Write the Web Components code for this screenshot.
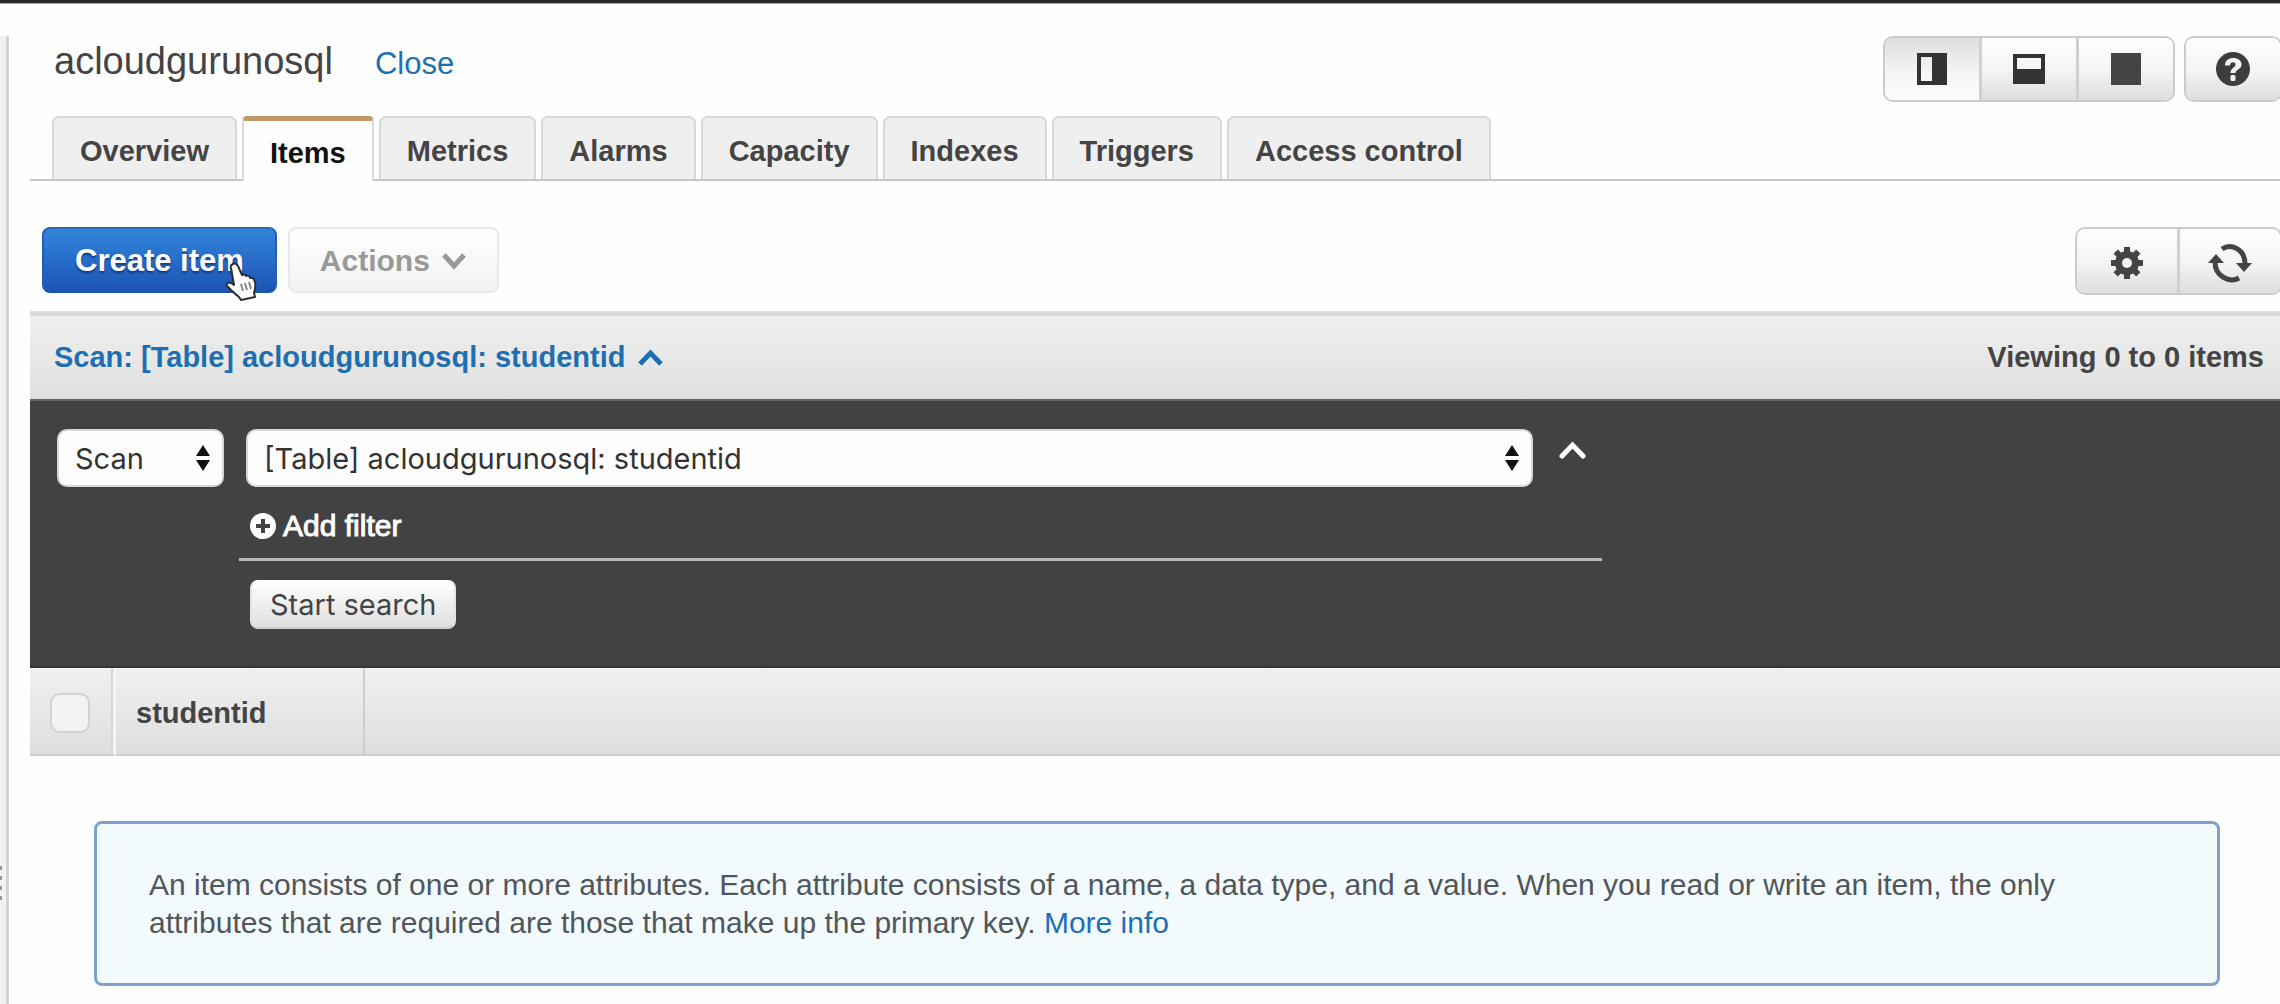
<!DOCTYPE html>
<html lang="en">
<head>
<meta charset="utf-8">
<title>acloudgurunosql</title>
<style>
html,body{margin:0;height:100%}
body{font-family:"Liberation Sans",Arial,sans-serif;font-size:29px;line-height:34px;color:#444;background:#fefefe;overflow:hidden}
</style>
</head>
<body>
<db-console></db-console>

<template id="t-console">
<style>
:host{display:flex;flex-direction:column;min-height:100vh;border-top:3px solid #2b292b;box-sizing:border-box;box-shadow:inset 0 1px 0 #aaa}
.body{flex:1;display:flex;gap:21px}
main{flex:1;min-width:0;padding-top:33px}
.head{display:flex;align-items:flex-start;justify-content:space-between;padding-left:24px;margin-right:-2px}
.name{display:flex;align-items:baseline;gap:42px;line-height:50px}
h1{margin:0;font-size:38px;font-weight:400}
a{color:#1f6fb5;text-decoration:none}
.name a{font-size:31px}
.groups{display:flex;gap:9px}
console-tabs{margin-top:14px}
.tools{display:flex;justify-content:space-between;align-items:flex-start;padding:46px 0 16px 12px;margin-right:-2px}
.acts{display:flex;gap:11px}
.create{position:relative;display:block}
.cursor{position:absolute;left:182px;top:34px;width:34px;height:40px}
</style>
<div class="body">
<pane-splitter></pane-splitter>
<main>
  <header class="head">
    <div class="name"><h1>acloudgurunosql</h1><a href="#close">Close</a></div>
    <div class="groups">
      <button-group>
        <icon-button label="Split left and right" pressed><svg width="30" height="32" viewBox="0 0 30 32"><path fill="#333" fill-rule="evenodd" d="M0 0h30v32H0zM4 4v24h11V4z"/></svg></icon-button>
        <icon-button label="Split top and bottom"><svg width="32" height="30" viewBox="0 0 32 30"><path fill="#333" fill-rule="evenodd" d="M0 0h32v30H0zM4 4v11h24V4z"/></svg></icon-button>
        <icon-button label="Full pane"><svg width="30" height="32" viewBox="0 0 30 32"><path fill="#444" d="M0 0h30v32H0z"/></svg></icon-button>
      </button-group>
      <button-group>
        <icon-button label="Help"><svg width="34" height="34" viewBox="0 0 34 34"><circle cx="17" cy="17" r="17" fill="#3d3d3d"/><path d="M9 13.500C9 8 13 6 17 6c5 0 8.500 2.500 8.500 6.500 0 5-6 5-6 8.500h-5c0-5 5-5.500 5-8.500 0-1.500-1-2.200-2.500-2.200-1.700 0-2.800 1-3 3.200z" fill="#f4f4f4"/><rect x="14.500" y="23" width="5" height="6" rx="1.500" fill="#f4f4f4"/></svg></icon-button>
      </button-group>
    </div>
  </header>
  <console-tabs>
    <console-tab>Overview</console-tab><console-tab selected>Items</console-tab><console-tab>Metrics</console-tab><console-tab>Alarms</console-tab><console-tab>Capacity</console-tab><console-tab>Indexes</console-tab><console-tab>Triggers</console-tab><console-tab>Access control</console-tab>
  </console-tabs>
  <div class="tools">
    <div class="acts">
      <div class="create">
        <console-button kind="primary">Create item</console-button>
        <svg class="cursor" viewBox="0 0 34 40" aria-hidden="true"><path d="M9 3c2-1 4 0 5 2l4 9c2-1 4 0 4 1 2-1 4 0 4 2 3-1 4 1 5 4 1 5 0 8-1 11l1 4-14 3-2-3c-4-3-8-7-12-11-1-3 2-4 4-3l3 2L7 7C6 5 7 4 9 3z" fill="#fff" stroke="#2d2d35" stroke-width="2" stroke-linejoin="round"/><path d="M17 23l2 7M21 22l2 7M25 21l2 7" stroke="#888" stroke-width="2" fill="none"/></svg>
      </div>
      <console-button kind="off">Actions<svg slot="end" width="26" height="20" viewBox="0 0 26 20"><path d="M3 4l10 11L23 4" fill="none" stroke="#999" stroke-width="5"/></svg></console-button>
    </div>
    <button-group tall>
      <icon-button wide label="Settings"><svg width="34" height="34" viewBox="-17 -17 34 34"><g fill="#444"><path d="M-3-16h6v32h-6z"/><path d="M-3-16h6v32h-6z" transform="rotate(45)"/><path d="M-3-16h6v32h-6z" transform="rotate(90)"/><path d="M-3-16h6v32h-6z" transform="rotate(135)"/><circle r="12"/></g><circle r="5" fill="#f2f2f2"/></svg></icon-button>
      <icon-button wide label="Refresh"><svg width="44" height="40" viewBox="-22 -20 44 40"><g fill="none" stroke="#444" stroke-width="5"><path d="M-8-14C1-20 15-14 15 1"/><path d="M9 15C0 20-15 14-15-1"/></g><path fill="#444" d="M6 0h16l-8 9zM-6 0h-16l8-9z"/></svg></icon-button>
    </button-group>
  </div>
  <scan-panel></scan-panel>
  <item-table></item-table>
  <info-note>An item consists of one or more attributes. Each attribute consists of a name, a data type, and a value. When you read or write an item, the only attributes that are required are those that make up the primary key. <a href="#more">More info</a></info-note>
</main>
</div>
</template>

<template id="t-splitter">
<style>
:host{display:flex;flex-direction:column;justify-content:flex-end;width:9px;margin-top:33px;box-sizing:border-box;background:#f1f1f1;border-right:3px solid #d2d2d2;padding-bottom:102px}
svg{display:block}
</style>
<svg width="3" height="36" viewBox="0 0 3 36"><path d="M0 2h2M0 12h2M0 22h2M0 32h2" stroke="#999" stroke-width="4"/></svg>
</template>

<template id="t-group">
<style>
:host{display:flex;height:66px;box-sizing:border-box;border:2px solid #cbcbcb;border-radius:10px;overflow:hidden}
:host([tall]){height:68px}
</style><slot></slot>
</template>

<template id="t-icon">
<style>
:host{display:block;width:94px}
:host([wide]){width:100px}
:host(:not(:first-child)){border-left:3px solid #d0d0d0}
button{width:100%;height:100%;border:0;padding:0;display:flex;align-items:center;justify-content:center;background:linear-gradient(#fefefe,#f5f5f5 50%,#dedede)}
:host([wide]) button{padding-top:3px}
:host([pressed]) button{background:linear-gradient(#dedede,#f6f6f6 60%,#fefefe)}
</style><button type="button"><slot></slot></button>
</template>

<template id="t-tabs">
<style>:host{display:flex;align-items:flex-end;gap:5px;padding-left:22px;border-bottom:2px solid #c6c6c6}</style>
<slot></slot>
</template>

<template id="t-tab">
<style>
:host{display:block}
button{display:block;font:inherit;font-weight:700;color:#444;background:#efefef;border:2px solid #d8d8d8;border-bottom:0;border-radius:7px 7px 0 0;padding:16px 26px 11px;margin:0;white-space:nowrap}
:host([selected]){margin-bottom:-2px}
:host([selected]) button{background:#fefefe;color:#111;border-top:5px solid #c3966a;padding-top:15px;border-radius:5px 5px 0 0}
</style><button type="button" role="tab"><slot></slot></button>
</template>

<template id="t-button">
<style>
:host{display:block}
button{display:flex;align-items:center;gap:11px;height:66px;box-sizing:border-box;font:inherit;font-weight:700;border-radius:8px;padding:2px 30px 0;border:2px solid #e9e9e9;background:linear-gradient(#fff,#f2f2f2);color:#999;white-space:nowrap}
:host([kind=primary]) button{font-size:31px;padding:2px 31px 0;color:#fff;border-color:#2869b4 #2260b4 #1d51a5;background:linear-gradient(#3285dc,#1c54b5);text-shadow:0 2px 2px #123a78}
:host([kind=off]) button{font-size:30px}
:host([kind=plain]) button{height:49px;font-size:29px;font-weight:400;font-family:Inter,"Liberation Sans",sans-serif;color:#444;border-color:#fff #e4e4e4 #cfcfcf;padding:0 18px;background:linear-gradient(#fff,#dfdfdf)}
</style><button type="button"><slot></slot><slot name="end"></slot></button>
</template>

<template id="t-select">
<style>
:host{display:grid;align-items:center;min-width:0}
select{grid-area:1/1;appearance:none;width:100%;height:58px;box-sizing:border-box;border:2px solid #d6d6d6;border-radius:10px;background:#fdfdfd;color:#333;font:29px Inter,"Liberation Sans",sans-serif;padding:0 16px}
svg{grid-area:1/1;justify-self:end;margin-right:14px;pointer-events:none}
</style>
<select></select>
<svg width="14" height="26" viewBox="0 0 14 26"><path d="M0 11L7 0l7 11zM0 15h14L7 26z" fill="#111"/></svg>
</template>

<template id="t-scan">
<style>
:host{display:block}
.bar{display:flex;align-items:center;justify-content:space-between;height:81px;padding:0 16px 2px 24px;border-top:5px solid #dcdcdc;background:linear-gradient(#efefef,#e0e0e0);font-weight:700}
.bar a{display:flex;align-items:center;gap:12px;color:#1f6fb0;text-decoration:none}
form{background:#424242;margin:0;padding:30px 27px 39px;box-shadow:inset 0 2px 0 #666,inset 0 -2px 0 #353535}
.grid{display:grid;grid-template-columns:167px minmax(0,1363px);column-gap:15px}
.row{display:flex;gap:26px;padding-left:7px;margin-right:16px}
.row console-select{flex:1}
.up{border:0;background:none;padding:10px 0 0;align-self:flex-start;width:27px;height:32px}
.up svg,.add svg{display:block}
.add{display:flex;align-items:center;gap:7px;border:0;background:none;color:#fff;font:30px/34px "Liberation Sans",Arial,sans-serif;padding:0;margin:22px 0 15px 11px;-webkit-text-stroke:1px #fff}
.rest{grid-column:2}
hr{border:0;height:3px;background:#b9b9b9;margin:0 0 19px}
console-button{width:max-content;margin-left:11px}
</style>
<div class="bar"><a href="#scan">Scan: [Table] acloudgurunosql: studentid<svg width="27" height="18" viewBox="0 0 27 18"><path d="M3 16L13.500 5 24 16" fill="none" stroke="#1f6fb0" stroke-width="5"/></svg></a><span>Viewing 0 to 0 items</span></div>
<form>
 <div class="grid">
  <console-select label="Operation" value="Scan"></console-select>
  <div class="row"><console-select label="Table or index" value="[Table] acloudgurunosql: studentid"></console-select>
   <button class="up" type="button" aria-label="Collapse"><svg width="27" height="18" viewBox="0 0 27 18"><path d="M3 15L13.500 4 24 15" fill="none" stroke="#fff" stroke-width="5" stroke-linecap="round"/></svg></button></div>
  <div class="rest">
   <button class="add" type="button"><svg width="26" height="26" viewBox="0 0 26 26"><circle cx="13" cy="13" r="13" fill="#fff"/><path d="M13 6v14M6 13h14" stroke="#424242" stroke-width="4"/></svg>Add filter</button>
   <hr>
   <console-button kind="plain">Start search</console-button>
  </div>
 </div>
</form>
</template>

<template id="t-table">
<style>
:host{display:block}
table{width:100%;border-collapse:separate;border-spacing:0;table-layout:fixed;background:linear-gradient(#f0f0f0,#dedede)}
th{height:88px;box-sizing:border-box;padding:3px 0 0;text-align:left;border-bottom:2px solid #cfcfcf;font-weight:700}
.c{width:86px;border-right:3px solid #f5f5f5;box-shadow:inset -2px 0 0 #d6d6d6}
.s{width:249px;padding-left:20px;border-right:2px solid #cecece}
input{appearance:none;display:block;width:40px;height:40px;margin:0 0 0 20px;border:2px solid #d2d2d2;border-radius:10px;background:#f3f3f3}
</style>
<table><thead><tr><th class="c"><input type="checkbox" aria-label="Select all items"></th><th class="s">studentid</th><th></th></tr></thead></table>
</template>

<template id="t-note">
<style>
:host{display:block;margin:65px 60px 0 64px;border:3px solid #7da3c8;border-radius:8px;background:#f2fafe;padding:42px 52px 41px;font-size:30px;line-height:38px;color:#50565a}
p{margin:0}
</style><p><slot></slot></p>
</template>

<script>
const define = (tag, id, setup) => customElements.define(tag, class extends HTMLElement {
  constructor() {
    super();
    this.attachShadow({ mode: "open" }).append(document.getElementById(id).content.cloneNode(true));
  }
  connectedCallback() { if (setup) setup(this, this.shadowRoot); }
});
define("pane-splitter", "t-splitter");
define("button-group", "t-group");
define("icon-button", "t-icon", (el, root) => {
  const button = root.querySelector("button");
  button.setAttribute("aria-label", el.getAttribute("label"));
  button.setAttribute("aria-pressed", el.hasAttribute("pressed"));
});
define("console-tabs", "t-tabs", el => el.setAttribute("role", "tablist"));
define("console-tab", "t-tab", (el, root) => root.querySelector("button").setAttribute("aria-selected", el.hasAttribute("selected")));
define("console-button", "t-button", (el, root) => { root.querySelector("button").disabled = el.getAttribute("kind") === "off"; });
define("console-select", "t-select", (el, root) => {
  const select = root.querySelector("select");
  select.setAttribute("aria-label", el.getAttribute("label"));
  select.replaceChildren(new Option(el.getAttribute("value")));
});
define("scan-panel", "t-scan");
define("item-table", "t-table");
define("info-note", "t-note");
define("db-console", "t-console");
</script>
</body>
</html>
